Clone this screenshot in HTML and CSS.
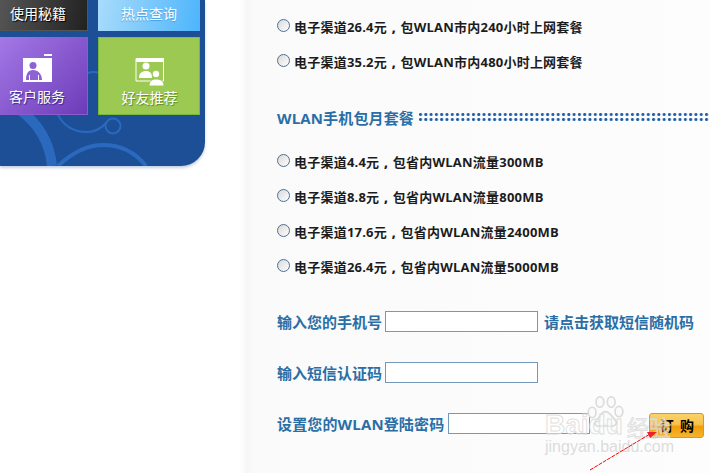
FILE: index.html
```html
<!DOCTYPE html>
<html lang="zh-CN">
<head>
<meta charset="utf-8">
<title>WLAN套餐订购</title>
<link rel="stylesheet" href="styles.css">
</head>
<body>
<div class="page">
  <aside class="panel">
    <svg class="panel-art" width="205" height="166" viewBox="0 0 205 166" aria-hidden="true">
      <g fill="none" stroke="#2a69bd">
        <path d="M20 110C40 125 50 145 52 166" stroke-width="10"/>
        <path d="M58 166C75 150 90 145 103 145C120 145 135 152 146 166" stroke-width="4"/>
        <path d="M58 115C65 128 75 132 87 132C95 132 102 128 107 122" stroke-width="2"/>
        <circle cx="113" cy="126" r="7.500" stroke-width="2"/>
        <path d="M88 73C93 71 100 72 105 76" stroke-width="2"/>
      </g>
    </svg>
    <div class="tiles">
      <div class="tile tile-dark"><span class="tile-label">使用秘籍</span></div>
      <div class="tile tile-sky"><span class="tile-label">热点查询</span></div>
      <div class="tile tile-purple">
        <svg class="tile-icon" width="30" height="28" viewBox="0 0 30 28" aria-hidden="true">
          <path fill="#fff" d="M1 4H30V28H1Z"/>
          <path fill="#fff" d="M22 0H30V2H22Z"/>
          <circle cx="11" cy="11.500" r="3.500" fill="#8f62d2"/>
          <path fill="#8f62d2" d="M4 26C4 20 6 16 11 16C16 16 20 20 20 26H17V21H16V26H8V21H7V26Z"/>
        </svg>
        <span class="tile-label label-purple">客户服务</span>
      </div>
      <div class="tile tile-green">
        <svg class="tile-icon" width="30" height="30" viewBox="0 0 30 30" aria-hidden="true">
          <path fill="none" stroke="#fff" d="M1 1.500H28.500V24H1Z"/>
          <path fill="#fff" d="M1 1H29V5H1Z"/>
          <circle cx="11" cy="9" r="3.500" fill="#fff"/>
          <path fill="#fff" d="M4 21C4 16 7 14 11 14C15 14 17 16 17 21Z"/>
          <circle cx="21" cy="17" r="3.800" fill="#fff" stroke="#9cc952"/>
          <path fill="#fff" stroke="#9cc952" d="M14 29C14 24 17 22 21 22C26 22 29 24 29 29Z"/>
        </svg>
        <span class="tile-label label-green">好友推荐</span>
      </div>
    </div>
  </aside>

  <main class="content">
    <section class="plans">
      <label class="plan"><span class="radio"></span><span>电子渠道26.4元<b class="sep">,</b>包WLAN市内240小时上网套餐</span></label>
      <label class="plan"><span class="radio"></span><span>电子渠道35.2元<b class="sep">,</b>包WLAN市内480小时上网套餐</span></label>
    </section>
    <h2 class="section-title"><span>WLAN手机包月套餐</span><i class="dots"></i></h2>
    <section class="plans">
      <label class="plan"><span class="radio"></span><span>电子渠道4.4元<b class="sep">,</b>包省内WLAN流量300MB</span></label>
      <label class="plan"><span class="radio"></span><span>电子渠道8.8元<b class="sep">,</b>包省内WLAN流量800MB</span></label>
      <label class="plan"><span class="radio"></span><span>电子渠道17.6元<b class="sep">,</b>包省内WLAN流量2400MB</span></label>
      <label class="plan"><span class="radio"></span><span>电子渠道26.4元<b class="sep">,</b>包省内WLAN流量5000MB</span></label>
    </section>
    <form class="form">
      <div class="field"><span>输入您的手机号</span><input class="input" type="text"><span>请点击获取短信随机码</span></div>
      <div class="field"><span>输入短信认证码</span><input class="input" type="text"></div>
      <div class="field field-last"><span class="label-wide">设置您的WLAN登陆密码</span><input class="input input-short" type="text"><button class="buy" type="button">订 购</button></div>
    </form>
  </main>

  <div class="watermark">
    <svg class="paw" width="40" height="32" viewBox="0 0 46 37" aria-hidden="true">
      <g fill="#fbfbfb" stroke="#dcdcdc" stroke-width="2">
        <ellipse cx="7" cy="19" rx="4.500" ry="6"/>
        <ellipse cx="16" cy="7" rx="4.500" ry="6"/>
        <ellipse cx="29" cy="7" rx="4.500" ry="6"/>
        <ellipse cx="38" cy="18" rx="4.500" ry="6"/>
        <path d="M22 18C28 18 30 25 34 28C37 32 33 36 27 35C24 34 21 34 17 35C11 36 8 32 12 28C16 25 17 18 22 18Z"/>
      </g>
    </svg>
    <span class="wm-main">Baidu</span>
    <span class="wm-cn">经验</span>
    <span class="wm-sub">jingyan.baidu.com</span>
  </div>
  <svg class="arrow" width="80" height="50" viewBox="0 0 80 50" aria-hidden="true">
    <path d="M2 46L62 10" stroke="#f00" fill="none" stroke-dasharray="4 1"/>
    <path fill="#f01f2f" d="M59 8H69L62 14Z"/>
  </svg>
</div>
</body>
</html>
```
FILE: styles.css
```css
* { box-sizing: border-box; }
html, body { margin: 0; height: 100%; overflow: hidden; background: #fff; }
body { font-family: "Open Sans", "Noto Sans CJK SC", sans-serif; }

.page {
  position: relative;
  display: flex;
  align-items: flex-start;
  width: 710px;
  height: 473px;
  overflow: hidden;
}

.panel {
  position: relative;
  flex: none;
  width: 205px;
  height: 166px;
  background: #1d4f97;
  border-bottom-right-radius: 24px;
  box-shadow: 0 2px 3px rgba(120, 150, 190, .45);
}
.panel-art { position: absolute; left: 0; top: 0; border-bottom-right-radius: 24px; }

.tiles {
  position: relative;
  display: grid;
  grid-template-columns: 88px 102px;
  grid-template-rows: 31px 78px;
  gap: 6px 10px;
}
.tile {
  display: flex;
  flex-direction: column;
  align-items: center;
  color: #fff;
  font-family: "Noto Sans CJK SC", sans-serif;
  font-size: 14px;
  line-height: 18px;
}
.tile-label { display: block; }
.tile-dark {
  justify-content: center;
  padding: 0 11px 4px 0;
  background: linear-gradient(100deg, #555 0%, #222 100%);
  border-right: 1px solid #555;
  border-bottom: 1px solid #555;
}
.tile-sky {
  justify-content: center;
  padding-bottom: 5px;
  background: linear-gradient(100deg, #a9dcfb 0%, #4db5fb 100%);
}
.tile-purple {
  padding: 17px 13px 0 0;
  background: linear-gradient(135deg, #a478e6 0%, #6c3cb8 100%);
  border-right: 1px solid #8a5cd0;
  border-bottom: 1px solid #8a5cd0;
}
.tile-green {
  padding: 19px 0 0 1px;
  background: #9cc952;
  border: 1px solid #7ab93a;
  border-top-color: #86bd40;
}
.tile-icon { display: block; flex: none; }
.label-purple { margin-top: 5px; text-shadow: 1px 1px 1px #3c2390; }
.label-green { margin-top: 1px; text-shadow: 1px 1px 1px #5f8a2a; }
.tile-dark .tile-label { text-shadow: 1px 1px 1px #000; }
.tile-sky .tile-label { text-shadow: 0 1px 1px #4a9fdc; }

.content {
  flex: none;
  width: 470px;
  height: 473px;
  margin-left: 35px;
  padding: 17px 0 0 37px;
  background: linear-gradient(90deg, #fff 0, #f6f6f6 7px, #fafafa 13px, #fdfdfd 100%);
}

.plans { display: flex; flex-direction: column; gap: 17px; }
.plan {
  display: flex;
  align-items: center;
  height: 18px;
  font-size: 13px;
  font-weight: 700;
  letter-spacing: .22px;
  color: #1c1c1c;
  white-space: nowrap;
}
.sep {
  display: inline-block;
  width: 13.500px;
  text-align: center;
}
.radio {
  flex: none;
  width: 13px;
  height: 13px;
  margin: -2px 4px 0 0;
  border: 1px solid #4f6f93;
  border-radius: 50%;
  background: linear-gradient(135deg, #d8d8d8, #fff);
}

.section-title {
  display: flex;
  align-items: center;
  height: 20px;
  margin: 37px 0 25px;
  font-size: 15px;
  font-weight: 700;
  letter-spacing: .15px;
  color: #2a6ea6;
  white-space: nowrap;
}
.dots {
  display: block;
  flex: none;
  width: 291px;
  height: 10px;
  margin: 0 0 1px 5px;
  background-image: radial-gradient(circle at 1.500px 2.500px, #1d5fa5 1.100px, rgba(29, 95, 165, .25) 1.700px, transparent 2px);
  background-size: 5.300px 5px;
}

.form { margin-top: 36px; }
.field {
  display: flex;
  align-items: center;
  height: 20px;
  margin-bottom: 31px;
  font-size: 15px;
  font-weight: 700;
  color: #2a6ea6;
  white-space: nowrap;
}
.field-last { margin-bottom: 0; }
.label-wide { letter-spacing: .15px; }
.input {
  flex: none;
  width: 153px;
  height: 21px;
  margin: 0 6px 0 3px;
  padding: 0;
  border: 1px solid #7499bb;
  background: #fff;
}
.input-short { width: 142px; margin-left: 4px; }
.buy {
  flex: none;
  width: 55px;
  height: 25px;
  margin: 4px 0 0 53px;
  padding: 0;
  border: 1px solid #d99a1c;
  border-radius: 3px;
  background: linear-gradient(180deg, #f9d36a 0%, #f7c24a 45%, #f29c0d 55%, #f7b52c 100%);
  color: #000;
  font-family: "Noto Sans CJK SC", sans-serif;
  font-size: 14px;
  font-weight: 700;
  word-spacing: 3px;
}

.watermark {
  position: absolute;
  left: 545px;
  top: 396px;
  width: 130px;
  height: 62px;
  pointer-events: none;
}
.paw { position: absolute; left: 41px; top: 0; }
.wm-main, .wm-cn {
  position: absolute;
  color: rgba(255, 255, 255, .35);
  -webkit-text-stroke: 1px rgba(215, 215, 215, .8);
  white-space: nowrap;
}
.wm-main {
  left: 0;
  top: 14px;
  font: 700 28px/30px "Liberation Sans", sans-serif;
}
.wm-cn {
  left: 82px;
  top: 16px;
  font: 400 22px/28px "Noto Sans CJK SC", sans-serif;
}
.wm-sub {
  position: absolute;
  left: 0;
  top: 42px;
  font: 16px/18px "Liberation Sans", sans-serif;
  color: rgba(205, 205, 205, .7);
  white-space: nowrap;
}
.arrow { position: absolute; left: 588px; top: 424px; }
```
